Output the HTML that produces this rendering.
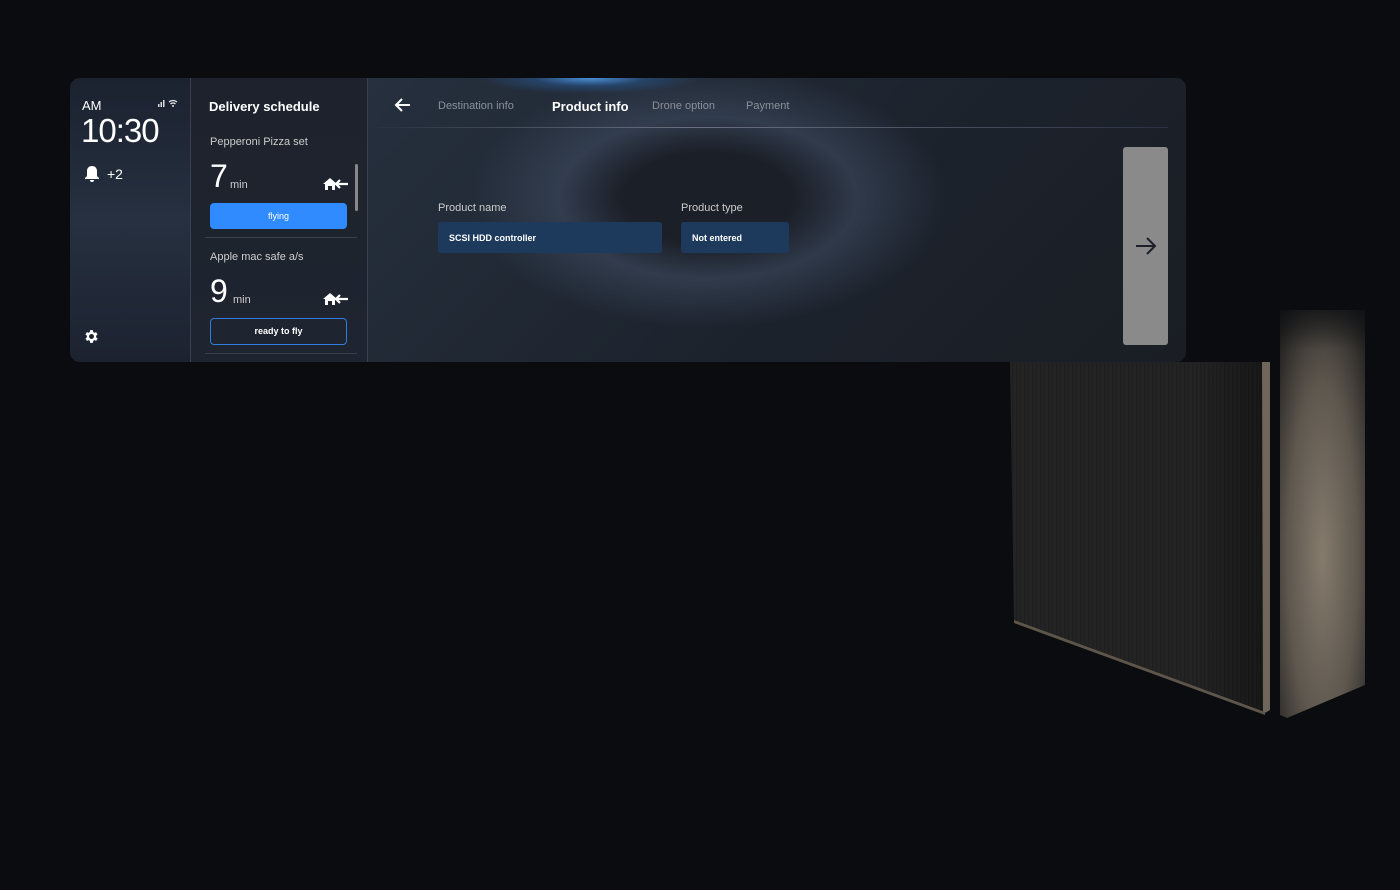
<!DOCTYPE html>
<html><head><meta charset="utf-8"><style>
*{margin:0;padding:0;box-sizing:border-box}
body{width:1400px;height:890px;background:#0a0c10;position:relative;overflow:hidden;font-family:"Liberation Sans",sans-serif;color:#fff}
.abs{position:absolute}
</style></head><body>
<!-- device -->
<svg class="abs" style="left:1000px;top:290px" width="380" height="440">
<defs>
<pattern id="st" width="4" height="10" patternUnits="userSpaceOnUse"><rect width="4" height="10" fill="#242424"/><rect width="1.5" height="10" fill="#1f1f1f"/></pattern>
<radialGradient id="bg" cx="0.5" cy="0.6" r="0.75"><stop offset="0" stop-color="#857b6d"/><stop offset="0.55" stop-color="#5e574e"/><stop offset="1" stop-color="#1e1e1e"/></radialGradient>
<linearGradient id="fade" x1="0" y1="0" x2="0" y2="1"><stop offset="0" stop-color="#0a0c10" stop-opacity="1"/><stop offset="0.3" stop-color="#0a0c10" stop-opacity="0"/></linearGradient>
<linearGradient id="sh" x1="0" y1="0" x2="1" y2="0"><stop offset="0" stop-color="#000" stop-opacity="0"/><stop offset="0.7" stop-color="#000" stop-opacity="0"/><stop offset="1" stop-color="#000" stop-opacity="0.35"/></linearGradient>
</defs>
<path d="M280 20 L365 20 L365 395 L287 428 L280 425 Z" fill="url(#bg)"/>
<path d="M10 72 L268 72 L268 420 L264 424 L20 335 L14 330 Z" fill="url(#st)"/>
<path d="M10 72 L268 72 L268 420 L264 424 L20 335 L14 330 Z" fill="url(#sh)"/>
<path d="M262 72 L270 72 L270 420 L263 424 Z" fill="#6e665a"/>
<path d="M14 330 L265 422 L265 425 L14 333 Z" fill="#5e564a"/>
<rect x="0" y="0" width="380" height="200" fill="url(#fade)"/>
</svg>
<!-- panel -->
<div class="abs" style="left:70px;top:78px;width:1116px;height:284px;border-radius:10px;overflow:hidden;background:#1c2028">
 <div class="abs" style="left:0;top:0;width:120px;height:284px;background:linear-gradient(180deg,#1b2230 0%,#263040 50%,#1c2230 100%)"></div>
 <div class="abs" style="left:120px;top:0;width:1px;height:284px;background:#3a4050"></div>
 <div class="abs" style="left:121px;top:0;width:176px;height:284px;background:linear-gradient(180deg,#1d222c,#1f2530)"></div>
 <div class="abs" style="left:297px;top:0;width:1px;height:284px;background:#3a4050"></div>
 <div class="abs" style="left:298px;top:0;width:818px;height:284px;background:radial-gradient(ellipse 110px 16px at 222px 0,#4a90d8 0,rgba(40,90,150,.5) 50%,transparent 100%),radial-gradient(ellipse 240px 130px at 340px 120px,#1b1f27 35%,rgba(70,85,110,.45) 62%,transparent 100%),linear-gradient(135deg,#26303e,#1c222c 60%,#1a1e24)"></div>
 <!-- left col -->
 <div class="abs" style="left:12px;top:20px;font-size:13px">AM</div>
 <svg class="abs" style="left:88px;top:20px" width="22" height="9" viewBox="0 0 22 9"><rect x="0" y="6" width="1.5" height="3" fill="#ddd"/><rect x="2.5" y="4" width="1.5" height="5" fill="#ddd"/><rect x="5" y="2" width="1.5" height="7" fill="#ddd"/><path d="M11 4a6 6 0 018 0M12.5 6a3.5 3.5 0 015 0" stroke="#ddd" stroke-width="1.3" fill="none"/><circle cx="15" cy="8" r="1" fill="#ddd"/></svg>
 <div class="abs" style="left:11px;top:34px;font-size:33px;font-weight:300;letter-spacing:-1px">10:30</div>
 <svg class="abs" style="left:13px;top:87px" width="18" height="18" viewBox="0 0 18 18"><path d="M9 1c-3 0-5 2-5 5v5l-2 2v1h14v-1l-2-2V6c0-3-2-5-5-5zM7 15a2 2 0 004 0z" fill="#fff"/></svg>
 <div class="abs" style="left:37px;top:88px;font-size:14px">+2</div>
 <svg class="abs" style="left:13px;top:250px" width="17" height="17" viewBox="0 0 24 24"><path fill="#fff" d="M19.4 13a7.5 7.5 0 000-2l2.1-1.6-2-3.5-2.5 1a7 7 0 00-1.7-1L15 3h-4l-.4 2.9a7 7 0 00-1.7 1l-2.5-1-2 3.5L6.6 11a7.5 7.5 0 000 2l-2.1 1.6 2 3.5 2.5-1a7 7 0 001.7 1L11 21h4l.4-2.9a7 7 0 001.7-1l2.5 1 2-3.5zM13 15.5a3.5 3.5 0 110-7 3.5 3.5 0 010 7z" transform="translate(-1 0)"/></svg>
 <!-- middle -->
 <div class="abs" style="left:139px;top:21px;font-size:13px;font-weight:bold">Delivery schedule</div>
 <div class="abs" style="left:140px;top:58px;font-size:11px;color:#ccc">Pepperoni Pizza set</div>
 <div class="abs" style="left:140px;top:80px;font-size:32px">7</div>
 <div class="abs" style="left:160px;top:101px;font-size:11px;color:#ccc">min</div>
 <svg class="abs" style="left:253px;top:99px" width="26" height="14" viewBox="0 0 26 14"><path d="M0 7L7 1l7 6h-2v6H9V9H5v4H2V7z" fill="#fff"/><path d="M12 7h13M17 3l-4 4 4 4" stroke="#fff" stroke-width="2.2" fill="none"/></svg>
 <div class="abs" style="left:140px;top:125px;width:137px;height:26px;border-radius:4px;background:#2f8bff;font-size:9px;text-align:center;line-height:26px">flying</div>
 <div class="abs" style="left:285px;top:86px;width:3px;height:47px;border-radius:2px;background:#888"></div>
 <div class="abs" style="left:135px;top:159px;width:152px;height:1px;background:#3a404c"></div>
 <div class="abs" style="left:140px;top:173px;font-size:11px;color:#ccc">Apple mac safe a/s</div>
 <div class="abs" style="left:140px;top:195px;font-size:32px">9</div>
 <div class="abs" style="left:163px;top:216px;font-size:11px;color:#ccc">min</div>
 <svg class="abs" style="left:253px;top:214px" width="26" height="14" viewBox="0 0 26 14"><path d="M0 7L7 1l7 6h-2v6H9V9H5v4H2V7z" fill="#fff"/><path d="M12 7h13M17 3l-4 4 4 4" stroke="#fff" stroke-width="2.2" fill="none"/></svg>
 <div class="abs" style="left:140px;top:240px;width:137px;height:27px;border-radius:4px;border:1.5px solid #2f7be0;font-size:9px;font-weight:bold;text-align:center;line-height:24px">ready to fly</div>
 <div class="abs" style="left:135px;top:275px;width:152px;height:1px;background:#3a404c"></div>
 <!-- main -->
 <svg class="abs" style="left:324px;top:19px" width="18" height="16" viewBox="0 0 18 16"><path d="M16 8H3M8 2L2 8l6 6" stroke="#fff" stroke-width="2" fill="none"/></svg>
 <div class="abs" style="left:368px;top:22px;font-size:11px;color:#8a909a">Destination info</div>
 <div class="abs" style="left:482px;top:21px;font-size:13px;font-weight:bold">Product info</div>
 <div class="abs" style="left:582px;top:22px;font-size:11px;color:#8a909a">Drone option</div>
 <div class="abs" style="left:676px;top:22px;font-size:11px;color:#8a909a">Payment</div>
 <div class="abs" style="left:308px;top:49px;width:790px;height:1px;background:linear-gradient(90deg,#2a3140,#6a7080 40%,#2a3140)"></div>
 <div class="abs" style="left:368px;top:124px;font-size:11px;color:#ccc">Product name</div>
 <div class="abs" style="left:611px;top:124px;font-size:11px;color:#ccc">Product type</div>
 <div class="abs" style="left:368px;top:144px;width:224px;height:31px;border-radius:3px;background:#1d3a5c;font-size:9px;font-weight:bold;line-height:33px;padding-left:11px">SCSI HDD controller</div>
 <div class="abs" style="left:611px;top:144px;width:108px;height:31px;border-radius:3px;background:#1d3a5c;font-size:9px;font-weight:bold;line-height:33px;padding-left:11px">Not entered</div>
 <div class="abs" style="left:1053px;top:69px;width:45px;height:198px;border-radius:3px;background:#8a8a8a"></div>
 <svg class="abs" style="left:1064px;top:157px" width="24" height="22" viewBox="0 0 24 22"><path d="M2 11h19M13 3l8 8-8 8" stroke="#1c2028" stroke-width="2" fill="none"/></svg>
</div>
</body></html>
